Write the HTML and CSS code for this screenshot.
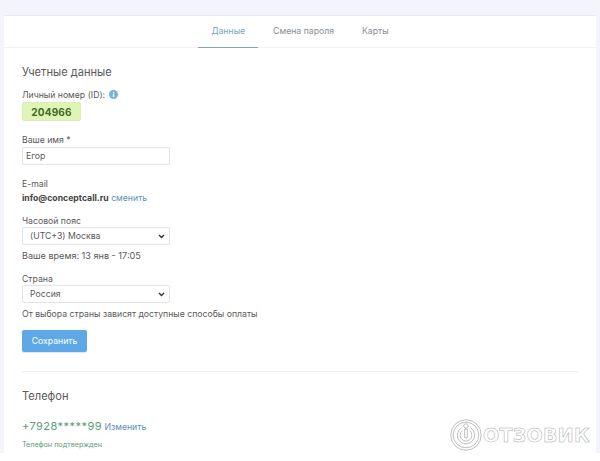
FILE: index.html
```html
<!DOCTYPE html>
<html lang="ru">
<head>
  <meta charset="UTF-8">
  <meta name="viewport" content="width=device-width, initial-scale=1.0">
  <title>Профиль</title>
  <link rel="stylesheet" href="styles.css">
</head>
<body>
  <div class="page">
    <div class="card">

      <!-- Tabs -->
      <div class="tabs">
        <a href="#" class="tab active">Данные</a>
        <a href="#" class="tab">Смена пароля</a>
        <a href="#" class="tab">Карты</a>
      </div>

      <div class="content">
        <h2>Учетные данные</h2>

        <div class="field-id">
          <div class="label">Личный номер (ID):
            <svg class="info" width="9" height="9" viewBox="0 0 9 9"><circle cx="4.5" cy="4.5" r="4.5" fill="#7eb0dc"/><rect x="3.9" y="3.8" width="1.3" height="3.2" fill="#fff"/><rect x="3.9" y="2" width="1.3" height="1.2" fill="#fff"/></svg>
          </div>
          <div class="id-badge">204966</div>
        </div>

        <div class="field name-field">
          <div class="label">Ваше имя *</div>
          <input class="input" type="text" value="Егор">
        </div>

        <div class="field email-field">
          <div class="label">E-mail</div>
          <div class="email"><b>info@conceptcall.ru</b> <a href="#">сменить</a></div>
        </div>

        <div class="field tz-field">
          <div class="label">Часовой пояс</div>
          <select class="input select"><option>(UTC+3) Москва</option></select>
          <div class="hint time">Ваше время: 13 янв - 17:05</div>
        </div>

        <div class="field country-field">
          <div class="label">Страна</div>
          <select class="input select"><option>Россия</option></select>
          <div class="hint">От выбора страны зависят доступные способы оплаты</div>
        </div>

        <button class="save">Сохранить</button>

        <hr>

        <h2 class="phone-title">Телефон</h2>
        <div class="phone"><span class="number">+7928*****99</span> <a href="#">Изменить</a></div>
        <div class="confirmed">Телефон подтвержден</div>
      </div>
    </div>
  </div>

  <!-- Watermark -->
  <div class="watermark">
    <svg width="32" height="32" viewBox="0 0 34 34" fill="none" stroke="#a9a9a9" stroke-width="0.8">
      <circle cx="17" cy="17" r="16.2"/>
      <circle cx="17" cy="17" r="13.6"/>
      <path d="M12 9.5a9.2 9.2 0 1 0 10 0"/>
      <path d="M13 12.5a6.2 6.2 0 1 0 8 0"/>
      <circle cx="17" cy="7.5" r="2.4"/>
      <path d="M15.6 11v9h2.8v-9z"/>
    </svg>
    <span class="wm-text">ОТЗОВИК</span>
  </div>
</body>
</html>
```

FILE: styles.css
```css
/* General */
body {
  font-family: Inter, "Liberation Sans", sans-serif;
  font-size: 8.7px;
  color: #5a5a5a;
  margin: 0;
  background-color: #fff;
  height: 461px;
  overflow: hidden;
  position: relative;
}

a {
  color: #5b90bd;
  text-decoration: none;
}

.page {
  background-color: #f3f5fa;
  height: 453px;
  padding: 15px 4px 0;
  box-sizing: border-box;
}

.card {
  background-color: #fff;
  border-top: 1px solid #e8ebf1;
  height: 100%;
  overflow: hidden;
}

/* Tabs */
.tabs {
  display: flex;
  justify-content: center;
  gap: 2px;
  height: 31px;
  border-bottom: 1px solid #f1f2f5;
}

.tab {
  padding: 10px 13px 0;
  color: #868e96;
  height: 21px;
}

.tab.active {
  color: #7aa3c4;
  border-bottom: 1px solid #7fa9b5;
}

/* Form */
.content {
  padding: 17px 18px 0;
}

h2 {
  font-size: 11.1px;
  font-weight: 400;
  color: #5a5a5a;
  margin: 0;
  line-height: 14px;
}

.label {
  line-height: 12px;
}

.field-id {
  margin-top: 10px;
}

.info {
  vertical-align: -1px;
  margin-left: 1px;
}

.id-badge {
  width: 59px;
  height: 19px;
  line-height: 18px;
  text-align: center;
  background-color: #dff5b8;
  border: 1px solid #d8eeb4;
  border-radius: 2px;
  box-sizing: border-box;
  color: #3f6b25;
  font-size: 10px;
  font-weight: 700;
  letter-spacing: 0.2px;
  margin-top: 1px;
}

.name-field {
  margin-top: 13px;
}

.input {
  display: block;
  width: 148px;
  height: 18px;
  box-sizing: border-box;
  font-family: inherit;
  font-size: 8.7px;
  color: #5a5a5a;
  background-color: #fff;
  border: 1px solid #e1e3e6;
  border-radius: 2px;
  padding: 0 3px;
  margin-top: 1px;
}

.select {
  appearance: none;
  padding-left: 7px;
  margin-top: 0;
  background: #fff url("data:image/svg+xml,%3Csvg xmlns='http://www.w3.org/2000/svg' width='7' height='5' viewBox='0 0 7 5'%3E%3Cpath d='M1 1l2.5 2.5L6 1' fill='none' stroke='%23333' stroke-width='1.4'/%3E%3C/svg%3E") no-repeat right 4px center;
}

.email-field {
  margin-top: 13px;
}

.email {
  margin-top: 1px;
  margin-bottom: 1px;
  line-height: 14px;
}

.email b {
  color: #444;
}

.tz-field {
  margin-top: 10px;
}

.hint {
  margin-top: 5px;
  line-height: 12px;
}

.hint.time {
  font-size: 9.1px;
}

.country-field {
  margin-top: 11px;
}

.save {
  display: block;
  width: 65px;
  height: 22px;
  margin-top: 10px;
  background-color: #5fa8e8;
  border: none;
  border-radius: 2px;
  color: #fff;
  font-family: inherit;
  font-size: 8.7px;
  box-shadow: 0 1px 1px rgba(0, 0, 0, 0.12);
}

hr {
  border: none;
  border-top: 1px solid #f0f1f3;
  margin: 19px 0 0;
}

.phone-title {
  margin-top: 17px;
}

.phone {
  margin-top: 16px;
  line-height: 14px;
}

.number {
  color: #5a9c7a;
  font-size: 11px;
  letter-spacing: 0.45px;
}

.confirmed {
  color: #5a9c7a;
  font-size: 7.2px;
  margin-top: 6px;
  line-height: 10px;
}

/* Watermark over the page */
.watermark {
  position: absolute;
  left: 450px;
  top: 419px;
  display: flex;
  align-items: center;
  gap: 1px;
}

.wm-text {
  font-family: "DejaVu Sans", sans-serif;
  font-size: 19px;
  font-weight: 700;
  color: #fff;
  -webkit-text-stroke: 0.5px #a9a9a9;
  letter-spacing: 0.3px;
}
```
